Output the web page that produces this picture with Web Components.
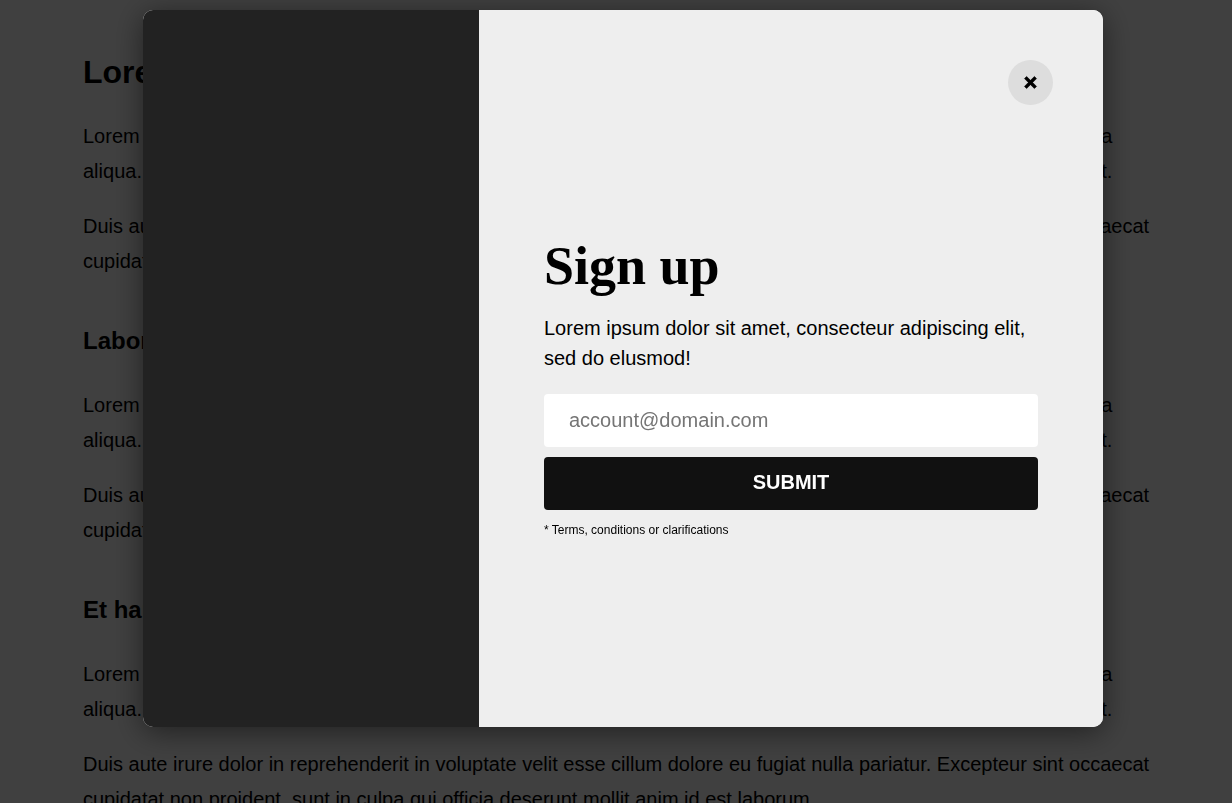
<!DOCTYPE html>
<html lang="en">
<head>
<meta charset="utf-8">
<meta name="viewport" content="width=device-width, initial-scale=1">
<title>Sign up</title>
<style>
  html, body { height: 100%; margin: 0; overflow: hidden; }
  body { background: #fff; color: #000; font: 20px/35px "Liberation Sans", Arial, sans-serif; }
</style>
</head>
<body>
<page-article>
  <article-section level="1" heading="Lorem ipsum"></article-section>
  <article-section level="2" heading="Labore et dolore"></article-section>
  <article-section level="2" heading="Et harum quidem"></article-section>
</page-article>
<modal-overlay>
  <signup-form></signup-form>
</modal-overlay>

<script>
class BaseElement extends HTMLElement {
  render(html) {
    const template = document.createElement('template');
    template.innerHTML = html;
    this.attachShadow({ mode: 'open' }).append(template.content.cloneNode(true));
  }
}

customElements.define('page-article', class extends BaseElement {
  constructor() {
    super();
    this.render(`
      <style>
        :host { display: block; height: 100%; overflow: hidden; box-sizing: border-box; padding: 44px 80px 0 83px; }
        main { display: flex; flex-direction: column; gap: 41px; }
      </style>
      <main><slot></slot></main>`);
  }
});

customElements.define('article-section', class extends BaseElement {
  connectedCallback() {
    if (this.shadowRoot) return;
    const tag = 'h' + this.getAttribute('level');
    this.render(`
      <style>
        :host { display: block; }
        h1, h2, p { margin: 0; }
        h1 { font-size: 32px; line-height: 56px; margin-bottom: 19px; }
        h2 { font-size: 24px; line-height: 42px; margin-bottom: 26px; }
        p + p { margin-top: 20px; }
      </style>
      <${tag}>${this.getAttribute('heading')}</${tag}>
      <p>Lorem ipsum dolor sit amet, consectetur adipisicing elit, sed do eiusmod tempor incididunt ut labore et dolore magna aliqua. Ut enim ad minim veniam, quis nostrud exercitation ullamco laboris nisi ut aliquip ex ea commodo consequat.</p>
      <p>Duis aute irure dolor in reprehenderit in voluptate velit esse cillum dolore eu fugiat nulla pariatur. Excepteur sint occaecat cupidatat non proident, sunt in culpa qui officia deserunt mollit anim id est laborum.</p>`);
  }
});

customElements.define('modal-overlay', class extends BaseElement {
  constructor() {
    super();
    this.render(`
      <style>
        :host { position: fixed; inset: 0; display: grid; box-sizing: border-box; padding: 10px 129px 76px 143px; background: rgba(0, 0, 0, .75); }
        .dialog { position: relative; display: grid; grid-template-columns: 35% 65%; border-radius: 10px; overflow: hidden; background: #fff; box-shadow: 0 5px 30px rgba(0, 0, 0, .5); }
        .cover { background: #222; }
        .content { display: flex; flex-direction: column; justify-content: center; padding: 0 65px; background: #eee; }
        .close { position: absolute; top: 50px; right: 50px; display: grid; place-items: center; width: 45px; height: 45px; padding: 0; border: 0; border-radius: 50%; background: #ddd; color: #000; }
        svg { display: block; }
      </style>
      <div class="dialog" role="dialog" aria-modal="true" aria-label="Sign up">
        <div class="cover"></div>
        <div class="content"><slot></slot></div>
        <button class="close" type="button" aria-label="Close">
          <svg width="15" height="15" viewBox="0 0 15 15" aria-hidden="true"><path d="M7.5 5.3L11.4 1.5L13.5 3.6L9.7 7.5L13.5 11.4L11.4 13.5L7.5 9.7L3.6 13.5L1.5 11.4L5.3 7.5L1.5 3.6L3.6 1.5Z" fill="currentColor" stroke="currentColor" stroke-width=".6" stroke-linejoin="round"/></svg>
        </button>
      </div>`);
  }
});

customElements.define('signup-form', class extends BaseElement {
  constructor() {
    super();
    this.render(`
      <style>
        :host { display: block; }
        h2 { margin: 40px 0 17px; font: bold 54px/60px "Liberation Serif", "Times New Roman", serif; }
        p { margin: 0 0 21px; line-height: 30px; }
        form { display: flex; flex-direction: column; gap: 10px; }
        input, button { box-sizing: border-box; width: 100%; height: 53px; margin: 0; border: 0; border-radius: 4px; font: inherit; }
        input { padding: 0 25px; background: #fff; color: #000; }
        input::placeholder { color: #757575; opacity: 1; }
        button { padding: 0 0 2px; background: #111; color: #fff; font-weight: bold; }
        small { display: block; font-size: 12px; line-height: 21px; }
      </style>
      <h2>Sign up</h2>
      <p>Lorem ipsum dolor sit amet, consecteur adipiscing elit, sed do elusmod!</p>
      <form>
        <input type="email" aria-label="Email" placeholder="account@domain.com">
        <button type="button">SUBMIT</button>
        <small>* Terms, conditions or clarifications</small>
      </form>`);
  }
});
</script>
</body>
</html>
